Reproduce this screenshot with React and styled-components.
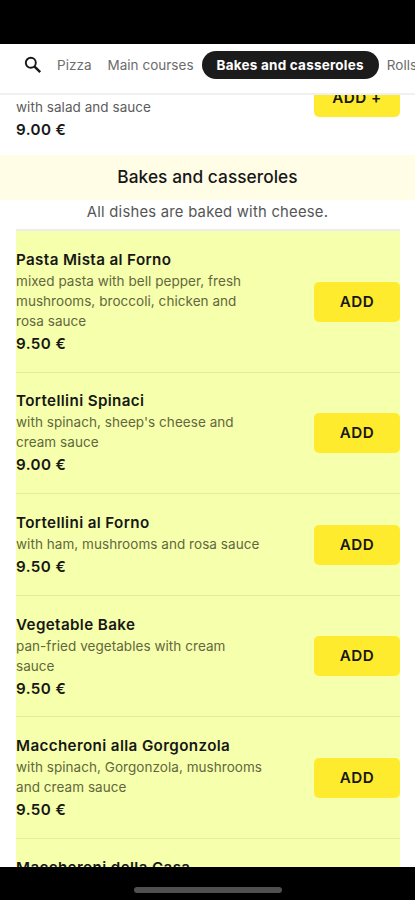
import React from "react";
import styled, { createGlobalStyle } from "styled-components";

const GlobalStyle = createGlobalStyle`
  * {
    box-sizing: border-box;
  }
  body {
    margin: 0;
    background: #fff;
    font-family: Inter, "Liberation Sans", sans-serif;
    color: #171717;
  }
`;

const Screen = styled.div`
  display: flex;
  flex-direction: column;
  width: 415px;
  height: 900px;
  overflow: hidden;
  background: #fff;
`;

const StatusBar = styled.div`
  flex: none;
  height: 44px;
  background: #000;
`;

const CategoryNav = styled.nav`
  display: flex;
  flex: none;
  align-items: flex-start;
  height: 51px;
  padding: 7px 0 0 24px;
  border-bottom: 2px solid #f0f0f0;
  overflow: hidden;
`;

const SearchIcon = styled.svg`
  flex: none;
  width: 18px;
  height: 18px;
  margin: 5px 7px 0 0;
`;

const Category = styled.a`
  flex: none;
  height: 28px;
  padding: 0 ${props => (props.$active ? "15px" : "8px")};
  border-radius: 14px;
  background: ${props => (props.$active ? "#1c1b1c" : "transparent")};
  color: ${props => (props.$active ? "#fff" : "#6c6c6c")};
  font-size: 13.5px;
  font-weight: ${props => (props.$active ? 700 : 400)};
  letter-spacing: ${props => (props.$active ? "0.22px" : "0.02px")};
  line-height: 28px;
  white-space: nowrap;
`;

const Menu = styled.main`
  flex: 1;
  min-height: 0;
  overflow: hidden;
`;

const PreviousDish = styled.div`
  display: flex;
  justify-content: space-between;
  height: 60px;
  padding: 2px 15px 0 16px;
`;

const SectionTitle = styled.h2`
  height: 45px;
  margin: 0;
  background: #fffde6;
  font-size: 17.3px;
  font-weight: 550;
  letter-spacing: 0.05px;
  line-height: 44px;
  text-align: center;
`;

const SectionNote = styled.p`
  height: 29px;
  margin: 0;
  color: #555;
  font-size: 14.8px;
  letter-spacing: 0.24px;
  line-height: 24px;
  text-align: center;
`;

const DishList = styled.div`
  margin: 0 15px 0 16px;
  border-top: 2px solid #ececec;
  background: #f6ffab;
`;

const Dish = styled.div`
  display: flex;
  align-items: center;
  justify-content: space-between;
  padding: 16.8px 0 16.3px;
  border-bottom: 1px solid #e4eca2;
`;

const DishName = styled.h3`
  margin: 0;
  font-size: 15.2px;
  font-weight: 600;
  letter-spacing: 0.37px;
  line-height: 23px;
  white-space: nowrap;
`;

const Description = styled.p`
  margin: 0;
  color: ${props => (props.$plain ? "#5c5c5c" : "#62673f")};
  font-size: 13.5px;
  letter-spacing: 0.05px;
  line-height: 20px;
  white-space: nowrap;
`;

const Price = styled.div`
  padding-top: 1px;
  font-size: 15.2px;
  font-weight: 600;
  letter-spacing: 0.4px;
  line-height: 23.5px;
`;

const AddButton = styled.button`
  flex: none;
  width: 86px;
  height: 40px;
  padding: 0;
  border: 0;
  border-radius: 5px;
  background: #ffeb2d;
  color: #171717;
  font-family: inherit;
  font-size: 15.2px;
  font-weight: 600;
  letter-spacing: 0.5px;
  line-height: 40px;
`;

const PreviousAddButton = styled(AddButton)`
  margin-top: -20px;
  padding-top: 1px;
`;

const HomeBar = styled.div`
  display: flex;
  flex: none;
  justify-content: center;
  height: 33px;
  padding-top: 20px;
  background: #000;
`;

const HomeIndicator = styled.div`
  width: 148px;
  height: 6px;
  border-radius: 3px;
  background: #505050;
`;

const dishes = [
  {
    name: "Pasta Mista al Forno",
    lines: [
      "mixed pasta with bell pepper, fresh",
      "mushrooms, broccoli, chicken and",
      "rosa sauce"
    ],
    price: "9.50 €"
  },
  {
    name: "Tortellini Spinaci",
    lines: ["with spinach, sheep's cheese and", "cream sauce"],
    price: "9.00 €"
  },
  {
    name: "Tortellini al Forno",
    lines: ["with ham, mushrooms and rosa sauce"],
    price: "9.50 €"
  },
  {
    name: "Vegetable Bake",
    lines: ["pan-fried vegetables with cream", "sauce"],
    price: "9.50 €"
  },
  {
    name: "Maccheroni alla Gorgonzola",
    lines: ["with spinach, Gorgonzola, mushrooms", "and cream sauce"],
    price: "9.50 €"
  },
  {
    name: "Maccheroni della Casa",
    lines: [],
    price: ""
  }
];

const App = () => (
  <Screen>
    <GlobalStyle />
    <StatusBar />
    <CategoryNav>
      <SearchIcon viewBox="0 0 18 18" fill="none" stroke="#171717">
        <circle cx="6.8" cy="6.8" r="5" strokeWidth="1.9" />
        <path d="M10.6 10.6L16.2 16.2" strokeWidth="2.4" />
      </SearchIcon>
      <Category>Pizza</Category>
      <Category>Main courses</Category>
      <Category $active>Bakes and casseroles</Category>
      <Category>Rolls</Category>
    </CategoryNav>
    <Menu>
      <PreviousDish>
        <div>
          <Description $plain>with salad and sauce</Description>
          <Price>9.00 €</Price>
        </div>
        <PreviousAddButton>ADD +</PreviousAddButton>
      </PreviousDish>
      <SectionTitle>Bakes and casseroles</SectionTitle>
      <SectionNote>All dishes are baked with cheese.</SectionNote>
      <DishList>
        {dishes.map(dish => (
          <Dish key={dish.name}>
            <div>
              <DishName>{dish.name}</DishName>
              {dish.lines.map(line => (
                <Description key={line}>{line}</Description>
              ))}
              <Price>{dish.price}</Price>
            </div>
            {dish.price && <AddButton>ADD</AddButton>}
          </Dish>
        ))}
      </DishList>
    </Menu>
    <HomeBar>
      <HomeIndicator />
    </HomeBar>
  </Screen>
);

export default App;
